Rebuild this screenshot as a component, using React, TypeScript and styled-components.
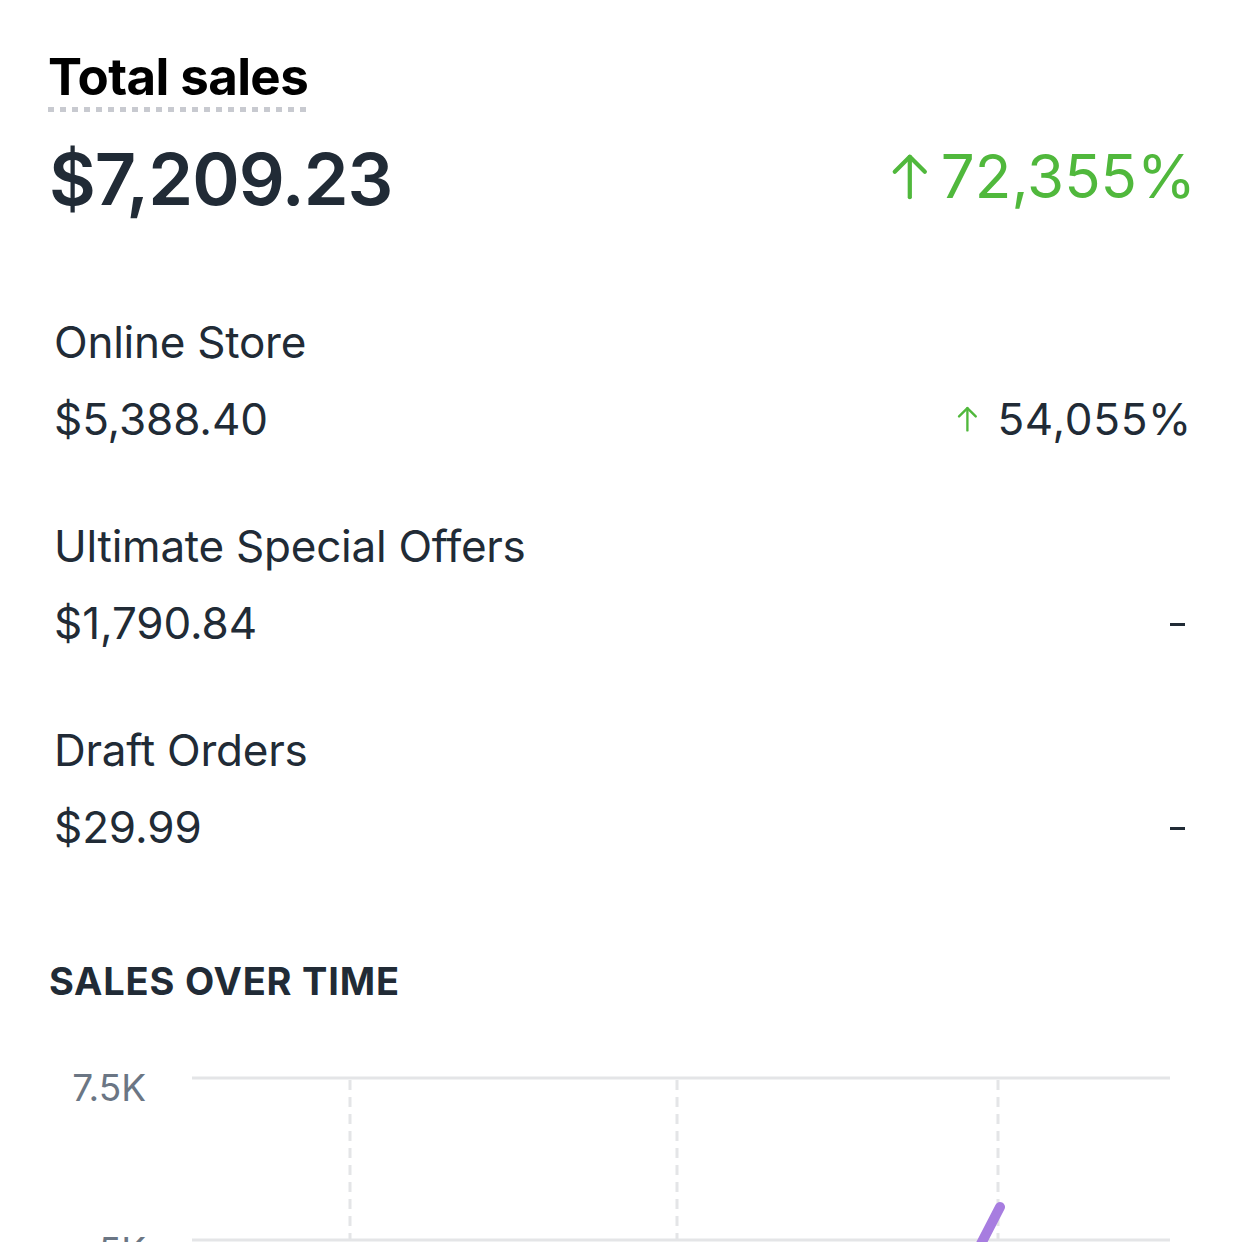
import React from "react";
import styled, { createGlobalStyle } from "styled-components";

const Global = createGlobalStyle`
  html, body { margin: 0; padding: 0; background: #ffffff; }
  body { font-family: Inter, "Noto Sans", "Liberation Sans", sans-serif; color: #212b36; }
`;

const Page = styled.div`
  padding: 47px 50px 0 50px;
  display: flex;
  flex-direction: column;
`;

const Title = styled.h1`
  align-self: flex-start;
  margin: 0 0 0 -2px;
  font-size: 51px;
  line-height: 60px;
  font-weight: 700;
  color: #000;
  letter-spacing: -0.6px;
  &::after {
    content: "";
    display: block;
    height: 5px;
    margin-left: 0;
    margin-right: -2px;
    background-image: repeating-linear-gradient(
      to right,
      #c8cad0 0 6px,
      transparent 6px 12px
    );
  }
`;

const SummaryRow = styled.div`
  margin-top: 27px;
  display: flex;
  align-items: center;
  justify-content: space-between;
`;

const BigValue = styled.div`
  font-size: 72px;
  line-height: 80px;
  font-weight: 600;
  letter-spacing: -1px;
  color: #212b36;
  margin-left: -1px;
`;

const Change = styled.div<{ $big?: boolean }>`
  display: flex;
  align-items: center;
  gap: ${(p) => (p.$big ? "12px" : "20px")};
  font-size: ${(p) => (p.$big ? "60px" : "44px")};
  line-height: ${(p) => (p.$big ? "80px" : "52px")};
  letter-spacing: ${(p) => (p.$big ? "0" : "0.7px")};
  font-weight: 400;
  color: ${(p) => (p.$big ? "#50b83c" : "#212b36")};
  margin-top: ${(p) => (p.$big ? "-6px" : "0")};
  margin-right: ${(p) => (p.$big ? "-4px" : "-1px")};
`;

const Channels = styled.div`
  margin-top: 97px;
  display: flex;
  flex-direction: column;
  gap: 75px;
  padding: 0 1px 0 4px;
`;

const Channel = styled.div`
  display: flex;
  flex-direction: column;
  gap: 25px;
`;

const ChannelName = styled.div`
  font-size: 44px;
  line-height: 52px;
  letter-spacing: -0.25px;
  color: #212b36;
`;

const ChannelValues = styled.div`
  display: flex;
  justify-content: space-between;
  align-items: center;
  font-size: 44px;
  line-height: 52px;
  letter-spacing: -0.1px;
  color: #212b36;
`;

const Dash = styled.span`
  display: block;
  width: 15px;
  height: 3px;
  background: #212b36;
  margin: 3px 6px 0 0;
`;

const SectionHeading = styled.h2`
  margin: 105px 0 0 -1px;
  font-size: 38px;
  line-height: 46px;
  font-weight: 700;
  letter-spacing: 0.8px;
  color: #212b36;
  text-transform: uppercase;
`;

const ChartWrap = styled.div`
  margin-top: 36px;
  height: 202px;
  overflow: hidden;
`;

const ArrowUp = ({ size, stroke }: { size: number; stroke: number }) => (
  <svg
    width={size * 0.8}
    height={size}
    viewBox="0 0 40 50"
    fill="none"
    stroke="#50b83c"
    strokeWidth={stroke}
    strokeLinecap="round"
    strokeLinejoin="round"
  >
    <path d="M20 4 L20 47" />
    <path d="M4 20 L20 4 L36 20" />
  </svg>
);

const Chart = () => (
  <svg width="1142" height="240" viewBox="0 0 1142 240">
    <line x1="142" y1="38" x2="1120" y2="38" stroke="#e4e5e7" strokeWidth="3" />
    <line x1="142" y1="200" x2="1120" y2="200" stroke="#e4e5e7" strokeWidth="3" />
    {[300, 627, 948].map((x) => (
      <line
        key={x}
        x1={x}
        y1="40"
        x2={x}
        y2="200"
        stroke="#e4e5e7"
        strokeWidth="3"
        strokeDasharray="10 7"
      />
    ))}
    <text
      x="96"
      y="61"
      textAnchor="end"
      fontFamily="Inter, 'Noto Sans', sans-serif"
      fontSize="37"
      fill="#6b7684"
    >
      7.5K
    </text>
    <text
      x="96"
      y="224"
      textAnchor="end"
      fontFamily="Inter, 'Noto Sans', sans-serif"
      fontSize="37"
      fill="#6b7684"
    >
      5K
    </text>
    <line
      x1="950"
      y1="167"
      x2="901"
      y2="262"
      stroke="#a77de0"
      strokeWidth="10"
      strokeLinecap="round"
    />
  </svg>
);

const channels = [
  { name: "Online Store", value: "$5,388.40", change: "54,055%" },
  { name: "Ultimate Special Offers", value: "$1,790.84", change: null },
  { name: "Draft Orders", value: "$29.99", change: null },
];

export default function App() {
  return (
    <>
      <Global />
      <Page>
        <Title>Total sales</Title>
        <SummaryRow>
          <BigValue>$7,209.23</BigValue>
          <Change $big>
            <ArrowUp size={47} stroke={4.5} />
            <span>72,355%</span>
          </Change>
        </SummaryRow>
        <Channels>
          {channels.map((c) => (
            <Channel key={c.name}>
              <ChannelName>{c.name}</ChannelName>
              <ChannelValues>
                <span>{c.value}</span>
                {c.change ? (
                  <Change>
                    <ArrowUp size={26} stroke={4.5} />
                    <span>{c.change}</span>
                  </Change>
                ) : (
                  <Dash />
                )}
              </ChannelValues>
            </Channel>
          ))}
        </Channels>
        <SectionHeading>Sales over time</SectionHeading>
        <ChartWrap>
          <Chart />
        </ChartWrap>
      </Page>
    </>
  );
}
